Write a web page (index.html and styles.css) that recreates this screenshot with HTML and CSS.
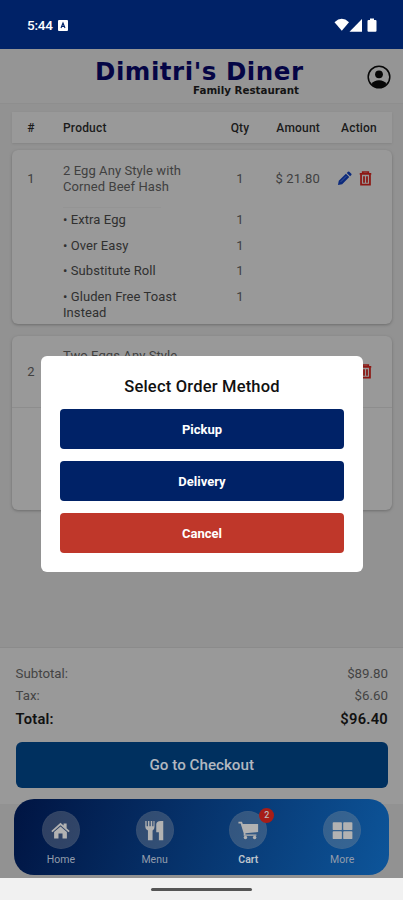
FILE: index.html
```html
<!DOCTYPE html>
<html lang="en">
<head>
<meta charset="utf-8">
<meta name="viewport" content="width=device-width, initial-scale=1">
<title>Dimitri's Diner</title>
<link rel="stylesheet" href="styles.css">
</head>
<body>
<svg width="0" height="0" class="defs">
  <symbol id="trash" viewBox="0 0 14 16"><path d="M4 2.2V1h6v1.2M.8 3h12.4" fill="none" stroke="currentColor" stroke-width="1.8"/><path d="M2.2 3.5v11h9.6v-11M5.4 5.500v7M8.600 5.500v7" fill="none" stroke="currentColor" stroke-width="1.9"/></symbol>
  <symbol id="pencil" viewBox="0 0 16 16"><path d="M1 15l.9-4.500 7.600-7.600 3.600 3.600-7.600 7.600zM10.400 2l1.300-1.300q.7-.6 1.400 0l2.200 2.200q.6.7 0 1.400L14 5.600z" fill="currentColor"/><path d="M4 11.500l6-6" stroke="#5065a0" stroke-width=".8"/></symbol>
</svg>
<div class="screen">
  <div class="status">
    <span class="time">5:44</span>
    <svg class="app" viewBox="0 0 10 11"><rect width="10" height="11" rx="1" fill="#fff"/><path d="M3 8l2-5 2 5M3.700 6.400h2.600" stroke="#002267" stroke-width="1.1" fill="none"/></svg>
    <svg class="signals" viewBox="0 0 44 15"><path d="M.5 4.200Q7.800-2.500 15 4.200L7.800 12.800z"/><path d="M28 1v12.700H15.500z"/><path d="M36 .5h4V2h1.500q1 0 1 1v9.700q0 1-1 1h-7q-1 0-1-1V3q0-1 1-1H36z"/></svg>
  </div>
  <header class="header">
    <div class="brand"><div class="name">Dimitri's Diner</div><div class="tag">Family Restaurant</div></div>
    <svg class="user" viewBox="0 0 24 24"><circle cx="12" cy="12" r="10.800" fill="none" stroke="#070707" stroke-width="1.500"/><circle cx="12" cy="9.300" r="3.900"/><path d="M4.500 19Q7 15.300 12 15.300T19.500 19Q16.500 22.500 12 22.500T4.500 19z"/></svg>
  </header>
  <main class="main">
    <div class="row head"><span class="num">#</span><span>Product</span><span class="qty">Qty</span><span class="amt">Amount</span><span class="act">Action</span></div>
    <section class="card">
      <div class="row item"><span class="num">1</span><span>2 Egg Any Style with<br>Corned Beef Hash</span><span class="qty">1</span><span class="amt">$ 21.80</span><span class="act"><svg class="pencil"><use href="#pencil"/></svg><svg class="trash"><use href="#trash"/></svg></span></div>
      <div class="row opt first"><span></span><span>• Extra Egg</span><span class="qty">1</span></div>
      <div class="row opt"><span></span><span>• Over Easy</span><span class="qty">1</span></div>
      <div class="row opt"><span></span><span>• Substitute Roll</span><span class="qty">1</span></div>
      <div class="row opt"><span></span><span>• Gluden Free Toast<br>Instead</span><span class="qty">1</span></div>
    </section>
    <section class="card second">
      <div class="row item"><span class="num">2</span><span>Two Eggs Any Style<br>&nbsp;<br>&nbsp;</span><span></span><span></span><span class="act"><svg class="pencil"><use href="#pencil"/></svg><svg class="trash"><use href="#trash"/></svg></span></div>
    </section>
  </main>
  <footer class="summary">
    <div class="line"><span>Subtotal:</span><span>$89.80</span></div>
    <div class="line"><span>Tax:</span><span>$6.60</span></div>
    <div class="line total"><span>Total:</span><span>$96.40</span></div>
    <button class="checkout">Go to Checkout</button>
  </footer>
  <div class="navwrap">
    <nav class="nav">
      <div class="tab"><div class="bubble"><svg viewBox="0 0 24 24"><path d="M1.500 12.500L12 3l3.500 3.200V4H19v5.500l3.500 3-1.300 1.500L12 5.900 2.800 14zM4.700 13.800L12 7.300l7.300 6.500V21h-5v-5.500H9.700V21h-5z"/></svg></div><span>Home</span></div>
      <div class="tab"><div class="bubble"><svg viewBox="0 0 24 24"><path d="M1.500 1H3v6h1.500V1h1.700v6h1.500V1h1.700v6h1.400V1h1.200v7q0 3-2.200 4V23H4.500V12q-3-1-3-4zM14 5q0-4 5-4h3v22h-5v-9h-3z"/></svg></div><span>Menu</span></div>
      <div class="tab active"><div class="bubble"><svg viewBox="0 0 24 24"><path d="M.5 2h4l1 2.500H23v9.300L8.500 15v1.500H21V18H6.500v-3L3 4H.5z"/><circle cx="8.500" cy="20" r="2"/><circle cx="19" cy="20" r="2"/></svg><b class="badge">2</b></div><span>Cart</span></div>
      <div class="tab"><div class="bubble"><svg viewBox="0 0 24 24"><rect x=".8" y="2.500" width="10.500" height="9" rx="1"/><rect x="12.800" y="2.500" width="10.500" height="9" rx="1"/><rect x=".8" y="12.800" width="10.500" height="9" rx="1"/><rect x="12.800" y="12.800" width="10.500" height="9" rx="1"/></svg></div><span>More</span></div>
    </nav>
  </div>
  <div class="system"><div class="handle"></div></div>
  <div class="modal" role="dialog">
    <h2>Select Order Method</h2>
    <button>Pickup</button>
    <button>Delivery</button>
    <button class="cancel">Cancel</button>
  </div>
</div>
</body>
</html>
```
FILE: styles.css
```css
* { box-sizing: border-box; }
body { margin: 0; font-family: Roboto, "Liberation Sans", sans-serif; }
button { border: 0; padding: 0; font-family: inherit; color: #fff; display: block; }
.defs { position: absolute; }
.screen { position: relative; width: 403px; height: 900px; overflow: hidden; display: flex; flex-direction: column; background: #929292; }
.status { height: 49px; flex: none; background: #002267; display: flex; align-items: center; padding: 1px 25px 0 27px; color: #fff; }
.time { font-size: 13.500px; font-weight: 500; letter-spacing: -.2px; width: 31px; }
.app { width: 10px; height: 11px; }
.signals { width: 44px; height: 15px; margin-left: auto; fill: #fff; }
.header { height: 55px; flex: none; background: #959595; border-bottom: 1px solid #8e8e8e; display: flex; justify-content: space-between; padding: 10px 12px 0 95px; }
.brand { width: 210px; font-family: "DejaVu Sans", sans-serif; font-weight: bold; white-space: nowrap; }
.name { font-size: 24.500px; letter-spacing: .55px; line-height: 26px; color: #050545; }
.tag { font-size: 10.300px; line-height: 11px; text-align: right; padding-right: 6px; color: #141414; }
.user { width: 24px; height: 24px; margin-top: 6px; fill: #070707; }
.main { flex: 1; padding: 8px 11px 0 12px; }
.row { display: grid; grid-template-columns: 38px 144px 66px 60px 1fr; }
.row > span:nth-child(2) { padding-left: 13px; white-space: nowrap; }
.num { text-align: center; }
.qty { padding-left: 26px; text-align: center; }
.amt { text-align: right; }
.act { display: flex; align-items: center; justify-content: center; padding-left: 6px; }
.head { height: 31px; align-items: center; background: #999; font-size: 12px; font-weight: 500; letter-spacing: .2px; color: #1b1b1b; box-shadow: 0 1px 2px #858585; margin-bottom: 7px; }
.card { height: 174px; background: #999; border-radius: 6px; box-shadow: 0 1px 3px #6d6d6d; margin-bottom: 12px; }
.item { height: 57px; align-items: center; font-size: 13px; line-height: 15.500px; color: #404040; }
.card .item > span:nth-child(2) { letter-spacing: .08px; }
.item .amt { letter-spacing: .2px; }
.item .act { padding: 0 4px 0 0; }
.act svg { flex: none; }
.pencil { width: 15px; height: 15px; color: #0c2a7c; }
.trash { width: 13px; height: 15px; color: #8c1713; margin-left: 7px; }
.opt { height: 25.700px; font-size: 13px; letter-spacing: .08px; line-height: 15.500px; padding-top: 5px; color: #303030; }
.opt .qty { color: #404040; }
.opt.first { background: linear-gradient(#949494, #949494) 51px 0 / 98px 1px no-repeat; }
.second .item { height: 72px; border-bottom: 1px solid #8d8d8d; }
.summary { height: 157px; flex: none; background: #999; border-top: 1px solid #8b8b8b; padding: 15px 15px 0 15.500px; }
.line { display: flex; justify-content: space-between; font-size: 13.300px; line-height: 22px; color: #444; }
.line + .line { margin-top: -.5px; }
.line.total { margin-top: .5px; font-size: 14.700px; font-weight: 600; letter-spacing: .25px; color: #111; line-height: 24px; }
.checkout { width: 100%; height: 46px; margin-top: 11px; background: #00305f; border-radius: 6px; color: #b2b8c0; font-size: 15.200px; font-weight: 500; }
.navwrap { height: 74px; flex: none; padding: 0 14px; }
.nav { position: relative; height: 76px; margin-top: -5px; border-radius: 20px; background: linear-gradient(110deg, #001442, #0d559a); display: grid; grid-template-columns: repeat(4, 1fr); }
.tab { display: flex; flex-direction: column; align-items: center; padding-top: 12px; color: #929cab; font-size: 10.500px; line-height: 13px; }
.tab > span { margin-top: 4px; }
.active { color: #bdc4cc; font-weight: 600; }
.bubble { position: relative; width: 38px; height: 38px; border-radius: 50%; background: rgba(155,155,155,.3); border: 1px solid rgba(155,155,155,.06); display: grid; place-items: center; }
.bubble svg { width: 21px; height: 21px; fill: #b2b2b2; }
.badge { position: absolute; right: -8px; top: -4px; width: 15px; height: 15px; border-radius: 50%; background: #a61d17; font-size: 9px; font-weight: 500; line-height: 15px; text-align: center; color: #bbb; }
.system { height: 22px; flex: none; background: #f1f1f1; display: flex; justify-content: center; padding-top: 10px; }
.handle { width: 101px; height: 3px; border-radius: 2px; background: #555; }
.modal { position: absolute; left: 41px; top: 356px; width: 322px; height: 216px; border-radius: 6px; background: #fff; padding: 20px 19px 0; }
.modal h2 { margin: 0 0 11px; text-align: center; font-size: 16.500px; letter-spacing: .2px; line-height: 22px; font-weight: 500; color: #111; }
.modal button { width: 100%; height: 40px; margin-bottom: 12px; border-radius: 4px; background: #002267; font-size: 13px; font-weight: 700; }
.modal .cancel { background: #bf372a; }
```
